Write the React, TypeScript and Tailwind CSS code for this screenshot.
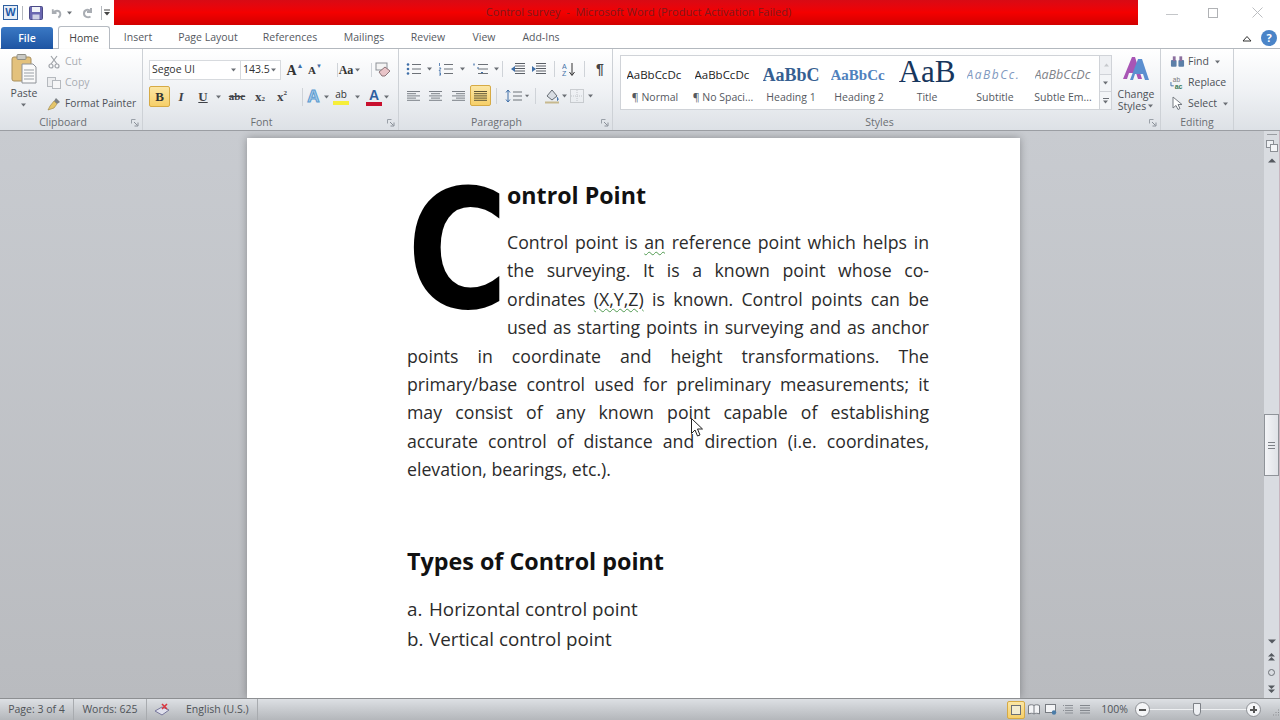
import type { ReactNode } from "react"

const ui = "font-['Open_Sans',sans-serif]"

function Caret({ className = "" }: { className?: string }) {
  return (
    <svg viewBox="0 0 6 4" className={`w-[6px] h-[4px] ${className}`}>
      <path d="M0 0.5h5L2.5 3.5z" fill="#6b6f75" />
    </svg>
  )
}

function Launcher() {
  return (
    <svg viewBox="0 0 8 8" className="w-[8px] h-[8px]">
      <path d="M0.5 0.5h4M0.5 0.5v4" stroke="#9aa0a8" fill="none" />
      <path d="M3 3l3.500 3.500M7 3.500V7H3.500" stroke="#8a9099" fill="none" />
    </svg>
  )
}

function Sep({ h = 18 }: { h?: number }) {
  return <div className="w-px bg-[#cfd3d8]" style={{ height: h }} />
}

function Cell({ w, children, className = "" }: { w: number; children?: ReactNode; className?: string }) {
  return (
    <div className={`flex items-center justify-center shrink-0 ${className}`} style={{ width: w }}>
      {children}
    </div>
  )
}

function Lines({ ys, x1 = 1, x2 = 13, color = "#6d7278" }: { ys: number[]; x1?: number; x2?: number; color?: string }) {
  return (
    <>
      {ys.map((y) => (
        <path key={y} d={`M${x1} ${y}H${x2}`} stroke={color} strokeWidth="1" />
      ))}
    </>
  )
}

function Align({ kind }: { kind: "left" | "center" | "right" | "justify" }) {
  const rows = [
    [1, 14],
    [1, 10],
    [1, 14],
    [1, 10],
    [1, 14],
  ]
  return (
    <svg viewBox="0 0 15 12" className="w-[15px] h-[12px]">
      {rows.map(([a, b], i) => {
        let x1 = a
        let x2 = b
        if (b === 10 && kind === "center") {
          x1 = 3
          x2 = 12
        }
        if (b === 10 && kind === "right") {
          x1 = 5
          x2 = 14
        }
        if (kind === "justify") x2 = 14
        return <path key={i} d={`M${x1} ${1.5 + i * 2.2}H${x2}`} stroke={kind === "justify" ? "#5d5436" : "#7b8087"} />
      })}
    </svg>
  )
}

function ListIcon({ kind }: { kind: "bullet" | "number" | "multi" }) {
  return (
    <svg viewBox="0 0 16 14" className="w-[16px] h-[14px]">
      {kind === "bullet" && (
        <>
          <circle cx="2" cy="2.5" r="1.3" fill="#3f6fa8" />
          <circle cx="2" cy="7" r="1.3" fill="#3f6fa8" />
          <circle cx="2" cy="11.5" r="1.3" fill="#3f6fa8" />
        </>
      )}
      {kind === "number" && (
        <path d="M1.500 1v3M1 6h2l-2 3h2M1 11h2l-1 1 1 1H1" stroke="#3f6fa8" fill="none" strokeWidth="0.8" />
      )}
      {kind === "multi" && <path d="M1 1.500v2M4 6h2M8 10.500h2" stroke="#3f6fa8" strokeWidth="1.2" />}
      <Lines ys={[2.5, 7, 11.5]} x1={kind === "multi" ? 5 : 6} x2={15} />
    </svg>
  )
}

function Indent({ dir }: { dir: "dec" | "inc" }) {
  return (
    <svg viewBox="0 0 16 14" className="w-[16px] h-[14px]">
      <Lines ys={[1.5, 4, 6.5, 9, 11.5]} x1={5} x2={15} color="#5a5f66" />
      <path d={dir === "dec" ? "M5 4L1 7l4 3z" : "M1 4l4 3-4 3z"} fill="#3f6fa8" />
    </svg>
  )
}

function WordIcon() {
  return (
    <div className="w-[15px] h-[15px] bg-[#e6edf6] border border-[#2f5f9f] flex items-center justify-center">
      <span className="font-['Liberation_Sans',sans-serif] font-bold text-[11px] leading-none text-[#1f5aa8]">W</span>
    </div>
  )
}

function TitleBar() {
  return (
    <div className="h-[25px] flex bg-white">
      <div className="w-[114px] flex items-center shrink-0">
        <Cell w={3} />
        <WordIcon />
        <Cell w={4} />
        <div className="w-px h-[14px] bg-[#b5b9bf]" />
        <Cell w={6} />
        <svg viewBox="0 0 14 14" className="w-[14px] h-[14px]">
          <rect x="0.5" y="0.5" width="13" height="13" rx="1" fill="#6a67b0" stroke="#4b4a86" />
          <rect x="3" y="1" width="8" height="5" fill="#f1f3f8" />
          <rect x="3.5" y="8.5" width="7" height="5" fill="#cfd1e6" />
        </svg>
        <Cell w={7} />
        <svg viewBox="0 0 14 12" className="w-[13px] h-[12px]">
          <path d="M3 2v4h4M3.500 6C5 3 10 2.500 11 6c.5 2-.5 4-2 5" stroke="#a9adb3" strokeWidth="2" fill="none" />
        </svg>
        <Cell w={4} />
        <Caret />
        <Cell w={9} />
        <svg viewBox="0 0 12 12" className="w-[12px] h-[12px]">
          <path d="M9 1v4H5M8.500 4.500C6 1.500 2 3 2 6.500S6 11 8.500 9.500" stroke="#a9adb3" strokeWidth="2" fill="none" />
        </svg>
        <Cell w={7} />
        <div className="w-px h-[14px] bg-[#b5b9bf]" />
        <Cell w={2} />
        <svg viewBox="0 0 7 7" className="w-[7px] h-[7px]">
          <path d="M0 1h6" stroke="#444" />
          <path d="M0 3h6L3 6.500z" fill="#444" />
        </svg>
      </div>
      <div className="w-[1024px] h-[25px] pl-[25px] flex items-center justify-center bg-gradient-to-b from-[#d80a14] via-[#f40000] to-[#d20000] shrink-0">
        <span className={`${ui} text-[11px] whitespace-pre text-[#7d1a1e]`}>Control survey  -  Microsoft Word (Product Activation Failed)</span>
      </div>
      <div className="flex-1 flex items-center">
        <Cell w={28} />
        <div className="w-[12px] h-px bg-[#c4c6c9] mt-1" />
        <Cell w={30} />
        <div className="w-[10px] h-[10px] border border-[#b0b2b5]" />
        <Cell w={34} />
        <svg viewBox="0 0 11 11" className="w-[11px] h-[11px]">
          <path d="M0.5 0.5l10 10M10.5 0.5l-10 10" stroke="#bcbec1" />
        </svg>
      </div>
    </div>
  )
}

function Tabs() {
  const tabs = [
    ["Insert", 56],
    ["Page Layout", 84],
    ["References", 80],
    ["Mailings", 68],
    ["Review", 60],
    ["View", 52],
    ["Add-Ins", 62],
  ] as const
  return (
    <div className={`${ui} h-[24px] flex items-end bg-white border-b border-[#b6bbc2] text-[10.5px] text-[#55595f] relative`}>
      <div className="ml-px w-[52px] h-[22px] pt-px rounded-t-[3px] bg-gradient-to-b from-[#3a78c4] to-[#1e55a3] text-white font-semibold flex items-center justify-center -mb-px">
        File
      </div>
      <div className="ml-[5px] w-[52px] h-[23px] pt-[2px] rounded-t-[3px] border border-b-0 border-[#b6bbc2] bg-white flex items-center justify-center -mb-px text-[#444]">
        Home
      </div>
      {tabs.map(([t, w]) => (
        <div key={t} className="h-[23px] pt-[3px] flex items-center justify-center" style={{ width: w }}>
          {t}
        </div>
      ))}
      <div className="flex-1" />
      <div className="h-[23px] pt-[3px] flex items-center gap-[9px] pr-[3px]">
        <svg viewBox="0 0 10 7" className="w-[10px] h-[7px]">
          <path d="M1 6l4-4.500L9 6z" fill="none" stroke="#333" />
        </svg>
        <div className="w-[16px] h-[16px] rounded-full bg-[#4a84c8] text-white font-bold text-[11px] flex items-center justify-center">?</div>
      </div>
    </div>
  )
}

function Group({ label, width, pr = 0, launcher = true, children }: { label: string; width: number; pr?: number; launcher?: boolean; children: ReactNode }) {
  return (
    <div className="h-full flex flex-col border-r border-[#cdd1d6] shrink-0 relative" style={{ width }}>
      <div className="flex-1 min-h-0">{children}</div>
      <div className="h-[16px] pt-[2px] flex items-center justify-center text-[10.5px] text-[#6a6e73]" style={{ paddingRight: pr }}>
        {label}
      </div>
      {launcher && (
        <div className="absolute right-[3px] bottom-[3px]">
          <Launcher />
        </div>
      )}
    </div>
  )
}

function Clipboard() {
  return (
    <div className="flex pt-[5px] pl-[5px]">
      <div className="w-[38px] flex flex-col items-center">
        <svg viewBox="0 0 26 30" className="w-[26px] h-[30px]">
          <rect x="1" y="3" width="19" height="24" rx="2" fill="#e3c17c" stroke="#a88f5e" />
          <rect x="6" y="0.5" width="9" height="5" rx="1" fill="#c9c9c4" stroke="#8e8e86" />
          <path d="M11 10h11l3 3v16H11z" fill="#fafafa" stroke="#8e9298" />
          <path d="M13 16h10M13 19h10M13 22h10M13 25h10" stroke="#9aa0a6" />
        </svg>
        <span className="mt-[3px] text-[10.5px] leading-[13px] text-[#4d5157]">Paste</span>
        <Caret className="mt-[3px]" />
      </div>
      <div className="pl-[2px] -mt-[3px] text-[10.5px] leading-[21px]">
        <div className="flex items-center h-[21px] text-[#a9adb3]">
          <svg viewBox="0 0 12 14" className="w-[12px] h-[14px] mx-[3px]">
            <path d="M3 1l6 8M9 1L3 9" stroke="#9fa3a8" strokeWidth="1.2" />
            <circle cx="3" cy="11" r="2" fill="none" stroke="#a0a4aa" strokeWidth="1.2" />
            <circle cx="9" cy="11" r="2" fill="none" stroke="#a0a4aa" strokeWidth="1.2" />
          </svg>
          <span className="ml-[2px]">Cut</span>
        </div>
        <div className="flex items-center h-[21px] text-[#a9adb3]">
          <svg viewBox="0 0 14 12" className="w-[14px] h-[12px] mx-[2px]">
            <rect x="0.5" y="0.5" width="8" height="9" fill="#ecedef" stroke="#b5b9be" />
            <rect x="5.5" y="3.5" width="8" height="8" fill="#f6f6f7" stroke="#b5b9be" />
          </svg>
          <span className="ml-[2px]">Copy</span>
        </div>
        <div className="flex items-center h-[21px] text-[#4d5157]">
          <svg viewBox="0 0 14 14" className="w-[14px] h-[14px] mx-[2px]">
            <path d="M9 1l4 4-3 2-3-3z" fill="#7d8186" />
            <path d="M7 4l3 3-3 4-6 2 2-4z" fill="#e5c56a" stroke="#9a8343" strokeWidth="0.6" />
          </svg>
          <span className="ml-[2px] text-[10.2px] whitespace-nowrap">Format Painter</span>
        </div>
      </div>
    </div>
  )
}

function FontGroup() {
  return (
    <div className="pt-[11px] pl-[6px] text-[#3f4247]">
      <div className="h-[20px] flex items-center">
        <div className="w-[92px] h-[20px] bg-white border border-[#d7dade] flex items-center justify-between pl-[2px] pr-[3px] text-[10.5px] text-[#333]">
          Segoe UI
          <Caret />
        </div>
        <div className="w-[40px] h-[20px] bg-white border border-l-0 border-[#d7dade] flex items-center justify-between pl-[2px] pr-[3px] text-[10.5px] text-[#333] overflow-hidden">
          <span className="w-[27px] overflow-hidden">143.5</span>
          <Caret />
        </div>
        <Cell w={4} />
        <Cell w={20} className="font-['Liberation_Serif',serif] font-bold text-[14px] text-[#333]">
          A<span className="text-[7px] -mt-2 text-[#3f6fa8]">▲</span>
        </Cell>
        <Cell w={20} className="font-['Liberation_Serif',serif] font-bold text-[11px] text-[#333]">
          A<span className="text-[6px] -mt-2 text-[#3f6fa8]">▼</span>
        </Cell>
        <Cell w={12} />
        <Sep h={14} />
        <Cell w={24} className="font-['Liberation_Serif',serif] font-bold text-[12px] text-[#333]">
          Aa
          <Caret className="ml-[2px]" />
        </Cell>
        <Cell w={9} />
        <Sep h={14} />
        <Cell w={21}>
          <svg viewBox="0 0 16 16" className="w-[16px] h-[16px]">
            <rect x="1" y="1" width="11" height="7" fill="#f4f4f4" stroke="#8d9197" />
            <path d="M4 10l6-5 5 4-5 5H7z" fill="#e9c4c8" stroke="#8d7478" />
          </svg>
        </Cell>
      </div>
      <div className="h-[21px] mt-[6px] flex items-center">
        <div className="w-[21px] h-[21px] rounded-[2px] border border-[#d6aa45] bg-gradient-to-b from-[#fbe6a4] to-[#f6cf68] flex items-center justify-center font-['Liberation_Serif',serif] font-bold text-[13px] text-[#333]">
          B
        </div>
        <Cell w={22} className="font-['Liberation_Serif',serif] italic font-bold text-[13px]">
          I
        </Cell>
        <Cell w={22} className="font-['Liberation_Serif',serif] font-bold text-[13px] underline">
          U
        </Cell>
        <Cell w={10}>
          <Caret />
        </Cell>
        <Cell w={26} className="font-['Liberation_Serif',serif] font-bold text-[11px] line-through">
          abc
        </Cell>
        <Cell w={20} className="font-['Liberation_Serif',serif] font-bold text-[13px]">
          x<span className="text-[7px] mt-[6px]">2</span>
        </Cell>
        <Cell w={24} className="font-['Liberation_Serif',serif] font-bold text-[13px]">
          x<span className="text-[7px] -mt-[6px]">2</span>
        </Cell>
        <Cell w={8} />
        <Sep h={18} />
        <Cell w={21} className="font-['Liberation_Sans',sans-serif] font-bold text-[17px] text-[#a9cdea] [-webkit-text-stroke:1px_#5b9bd0]">
          A
        </Cell>
        <Cell w={6}>
          <Caret />
        </Cell>
        <Cell w={3} />
        <div className="w-[16px] h-[18px] flex flex-col items-center">
          <span className="text-[10px] leading-[13px] text-[#333]">ab</span>
          <div className="w-[16px] h-[4px] bg-[#f6ee3a]" />
        </div>
        <Cell w={17}>
          <Caret />
        </Cell>
        <div className="w-[16px] h-[18px] flex flex-col items-center">
          <span className="font-['Liberation_Sans',sans-serif] font-bold text-[14px] leading-[14px] text-[#2f5f9f]">A</span>
          <div className="w-[16px] h-[4px] bg-[#c8102e]" />
        </div>
        <Cell w={10}>
          <Caret />
        </Cell>
      </div>
    </div>
  )
}

function ParagraphGroup() {
  return (
    <div className="pt-[11px] pl-[7px]">
      <div className="h-[18px] flex items-center">
        <Cell w={16}>
          <ListIcon kind="bullet" />
        </Cell>
        <Cell w={15}>
          <Caret />
        </Cell>
        <Cell w={18}>
          <ListIcon kind="number" />
        </Cell>
        <Cell w={15}>
          <Caret />
        </Cell>
        <Cell w={22}>
          <ListIcon kind="multi" />
        </Cell>
        <Cell w={10}>
          <Caret />
        </Cell>
        <Sep h={16} />
        <Cell w={7} />
        <Indent dir="dec" />
        <Cell w={5} />
        <Indent dir="inc" />
        <Cell w={7} />
        <Sep h={16} />
        <Cell w={7} />
        <svg viewBox="0 0 14 15" className="w-[14px] h-[15px]">
          <text x="0" y="7" fontSize="7" fontFamily="Liberation Sans" fill="#4472a8">A</text>
          <text x="0" y="14" fontSize="7" fontFamily="Liberation Sans" fill="#4472a8">Z</text>
          <path d="M10 1v12M7.500 10l2.500 3.500 2.500-3.500" stroke="#333" fill="none" />
        </svg>
        <Cell w={8} />
        <Sep h={16} />
        <Cell w={8} />
        <Cell w={14} className="font-['Liberation_Sans',sans-serif] font-bold text-[14px] text-[#444]">
          ¶
        </Cell>
      </div>
      <div className="h-[21px] mt-[7px] flex items-center">
        <Align kind="left" />
        <Cell w={7} />
        <Align kind="center" />
        <Cell w={8} />
        <Align kind="right" />
        <Cell w={4} />
        <div className="w-[21px] h-[21px] rounded-[2px] border border-[#d6aa45] bg-gradient-to-b from-[#fbe6a4] to-[#f6cf68] flex items-center justify-center">
          <Align kind="justify" />
        </div>
        <Cell w={5} />
        <Sep h={16} />
        <Cell w={8} />
        <svg viewBox="0 0 20 14" className="w-[20px] h-[14px]">
          <path d="M3 1v12M1 3.500L3 1l2 2.500M1 10.500L3 13l2-2.500" stroke="#3f6fa8" fill="none" />
          <Lines ys={[3, 7, 11]} x1={8} x2={17} />
        </svg>
        <Cell w={5}>
          <Caret />
        </Cell>
        <Cell w={5} />
        <Sep h={16} />
        <Cell w={8} />
        <svg viewBox="0 0 16 16" className="w-[16px] h-[16px]">
          <path d="M3 8l5-6 5 6-5 4z" fill="#d8dde3" stroke="#666c73" />
          <path d="M13 9c1 1.500 2 3 0 3.500" stroke="#4472a8" fill="#4472a8" />
          <path d="M1 14.500h14" stroke="#c7b98f" strokeWidth="2" />
        </svg>
        <Cell w={10}>
          <Caret />
        </Cell>
        <svg viewBox="0 0 14 14" className="w-[14px] h-[14px]">
          <rect x="0.5" y="0.5" width="13" height="13" fill="none" stroke="#a4a8ad" strokeDasharray="1 1" />
          <path d="M7 1v12M1 7h12" stroke="#c3c6ca" strokeDasharray="1 1" />
        </svg>
        <Cell w={14}>
          <Caret />
        </Cell>
      </div>
    </div>
  )
}

function StyleItem({ sample, label, className }: { sample: string; label: string; className: string }) {
  return (
    <div className="w-[68px] shrink-0 flex flex-col items-center">
      <div className="h-[32px] w-[57px] overflow-hidden flex items-center whitespace-nowrap">
        <span className={className}>{sample}</span>
      </div>
      <div className="text-[10.5px] leading-[13px] text-[#55595f] whitespace-nowrap">{label}</div>
    </div>
  )
}

function StylesGroup() {
  return (
    <div className="flex pt-[6px] pl-[7px]">
      <div className="w-[492px] h-[55px] bg-white border border-[#d0d3d8] flex">
        <div className="w-[479px] flex items-start pt-[3px]">
          <StyleItem sample="AaBbCcDc" label="¶ Normal" className="text-[11.5px] text-[#222]" />
          <StyleItem sample="AaBbCcDc" label="¶ No Spaci..." className="text-[11.5px] text-[#222]" />
          <StyleItem sample="AaBbCc" label="Heading 1" className="font-['Liberation_Serif',serif] font-bold text-[18px] text-[#365f91]" />
          <StyleItem sample="AaBbCc" label="Heading 2" className="font-['Liberation_Serif',serif] font-bold text-[15px] text-[#4f81bd]" />
          <StyleItem sample="AaB" label="Title" className="font-['Liberation_Serif',serif] text-[31px] -mt-[6px] text-[#17365d]" />
          <StyleItem sample="AaBbCc." label="Subtitle" className="italic text-[12px] tracking-[1.5px] text-[#7f99c0]" />
          <StyleItem sample="AaBbCcDc" label="Subtle Em..." className="italic text-[12.5px] text-[#7f8389]" />
        </div>
        <div className="w-[12px] flex flex-col border-l border-[#d0d3d8]">
          <div className="h-[18px] bg-[#eef0f3] flex items-center justify-center">
            <Caret className="rotate-180 opacity-30" />
          </div>
          <div className="h-[18px] bg-[#f3f5f7] border-y border-[#d0d3d8] flex items-center justify-center">
            <Caret />
          </div>
          <div className="flex-1 bg-[#f3f5f7] flex flex-col items-center justify-center gap-px">
            <div className="w-[6px] h-px bg-[#6b6f75]" />
            <Caret />
          </div>
        </div>
      </div>
      <div className="w-[50px] flex flex-col items-center">
        <svg viewBox="0 0 30 30" className="w-[30px] h-[30px] -mt-[1px]">
          <path d="M2 25L11 3h3l7 22h-4l-2-6H8l-2 6z" fill="#a855b5" />
          <path d="M9 26L17 5h4l7 21h-4l-2-6h-8l-2 6z" fill="#5b8fd0" />
        </svg>
        <div className="text-[10.5px] leading-[12px] text-center mt-[4px] text-[#4d5157]">
          Change
          <div className="flex items-center justify-center gap-[2px]">
            Styles
            <Caret />
          </div>
        </div>
      </div>
    </div>
  )
}

function EditingGroup() {
  return (
    <div className="pt-[2px] pl-[9px] text-[10.5px] text-[#4d5157]">
      <div className="h-[21px] flex items-center gap-[3px]">
        <svg viewBox="0 0 16 13" className="w-[15px] h-[13px]">
          <rect x="1" y="5" width="6" height="7" rx="1" fill="#5c7fa8" />
          <rect x="9" y="5" width="6" height="7" rx="1" fill="#5c7fa8" />
          <rect x="3" y="1" width="3" height="5" fill="#8b6f9e" />
          <rect x="10" y="1" width="3" height="5" fill="#8b6f9e" />
        </svg>
        Find
        <Caret className="ml-[3px]" />
      </div>
      <div className="h-[21px] flex items-center gap-[3px]">
        <svg viewBox="0 0 16 14" className="w-[15px] h-[14px]">
          <text x="3" y="6" fontSize="7" fontFamily="Liberation Sans" fill="#777">ab</text>
          <text x="5" y="13" fontSize="7.5" fontWeight="bold" fontFamily="Liberation Sans" fill="#3b7a57">ac</text>
          <path d="M1 6v4h3" stroke="#3f6fa8" fill="none" />
        </svg>
        Replace
      </div>
      <div className="h-[21px] flex items-center gap-[3px]">
        <svg viewBox="0 0 15 16" className="w-[15px] h-[16px]">
          <path d="M3 1v11l3-2.500 2 4 2-1-2-4h4z" fill="#fff" stroke="#777c83" />
        </svg>
        Select
        <Caret className="ml-[3px]" />
      </div>
    </div>
  )
}

function Ribbon() {
  return (
    <div className={`${ui} h-[82px] flex bg-gradient-to-b from-[#ffffff] via-[#f0f2f5] to-[#dde1e6] border-b border-[#9b9ea3] shadow-[0_1px_2px_rgba(0,0,0,0.25)] relative`}>
      <Group label="Clipboard" width={143} pr={16}>
        <Clipboard />
      </Group>
      <Group label="Font" width={256} pr={18}>
        <FontGroup />
      </Group>
      <Group label="Paragraph" width={214} pr={18}>
        <ParagraphGroup />
      </Group>
      <Group label="Styles" width={548} pr={14}>
        <StylesGroup />
      </Group>
      <Group label="Editing" width={73} launcher={false}>
        <EditingGroup />
      </Group>
    </div>
  )
}

function Line({ children }: { children: ReactNode }) {
  return <div className="[text-align-last:justify] whitespace-nowrap">{children}</div>
}

function Wavy({ children }: { children: ReactNode }) {
  return <span className="underline decoration-wavy decoration-[#4f9a4f] decoration-1 underline-offset-2">{children}</span>
}

function Page() {
  return (
    <div className="w-[773px] h-[560px] mt-[7px] ml-[247px] bg-white shadow-[0_0_8px_rgba(0,0,0,0.3)] pl-[160px] pr-[91px] pt-[42px] font-['Open_Sans',sans-serif] text-[#2b2b2b] overflow-hidden shrink-0">
      <div className="float-left w-[100px] h-[155px] font-['DejaVu_Sans',sans-serif] text-[166px] leading-[142px] font-bold text-black">
        <span className="inline-block origin-left scale-x-[0.83]">C</span>
      </div>
      <div className="text-[23.2px] leading-[30px] font-bold text-[#111]">ontrol Point</div>
      <div className="text-[17.7px] leading-[28.4px] mt-[18px]">
        <Line>
          Control point is <Wavy>an</Wavy> reference point which helps in
        </Line>
        <Line>the surveying. It is a known point whose co-</Line>
        <Line>
          ordinates <Wavy>(X,Y,Z)</Wavy> is known. Control points can be
        </Line>
        <Line>used as starting points in surveying and as anchor</Line>
        <Line>points in coordinate and height transformations. The</Line>
        <Line>primary/base control used for preliminary measurements; it</Line>
        <Line>may consist of any known point capable of establishing</Line>
        <Line>accurate control of distance and direction (i.e. coordinates,</Line>
        <div>elevation, bearings, etc.).</div>
      </div>
      <div className="text-[23.3px] leading-[32px] font-bold text-[#111] mt-[61px]">Types of Control point</div>
      <div className="text-[18.800px] leading-[30px] mt-[17px]">
        <div className="flex">
          <span className="w-[22px]">a.</span>Horizontal control point
        </div>
        <div className="flex">
          <span className="w-[22px]">b.</span>Vertical control point
        </div>
      </div>
    </div>
  )
}

function Scrollbar() {
  return (
    <div className="w-[16px] h-full bg-[#d9dce1] flex flex-col items-center shrink-0 border-r border-[#c9b3bd]">
      <div className="w-[10px] h-px bg-[#9a9da2] mt-[3px]" />
      <svg viewBox="0 0 12 12" className="w-[12px] h-[12px] mt-[5px]">
        <rect x="0.5" y="0.5" width="7" height="7" fill="#eef0f3" stroke="#8b8f95" />
        <rect x="4.5" y="4.5" width="7" height="7" fill="#f5f6f8" stroke="#8b8f95" />
      </svg>
      <svg viewBox="0 0 8 5" className="w-[8px] h-[5px] mt-[6px]">
        <path d="M0 4.500L4 0.500l4 4z" fill="#55595f" />
      </svg>
      <div className="h-[251px] shrink-0" />
      <div className="w-[15px] h-[62px] shrink-0 border border-[#8f9399] bg-gradient-to-r from-[#f3f4f7] to-[#dfe2e7] flex flex-col items-center justify-center gap-[2px]">
        <div className="w-[7px] h-px bg-[#7d8187]" />
        <div className="w-[7px] h-px bg-[#7d8187]" />
        <div className="w-[7px] h-px bg-[#7d8187]" />
      </div>
      <div className="flex-1" />
      <svg viewBox="0 0 8 5" className="w-[8px] h-[5px] mb-[9px]">
        <path d="M0 0.500L4 4.500l4-4z" fill="#55595f" />
      </svg>
      <svg viewBox="0 0 7 8" className="w-[7px] h-[8px] mb-[8px]">
        <path d="M0 3.500L3.500 0 7 3.500zM0 7.500L3.500 4 7 7.500z" fill="#55595f" />
      </svg>
      <div className="w-[7px] h-[7px] rounded-full border border-[#6c7076] mb-[9px]" />
      <svg viewBox="0 0 7 8" className="w-[7px] h-[8px] mb-[5px]">
        <path d="M0 0.500L3.500 4 7 0.500zM0 4.500L3.500 8 7 4.500z" fill="#55595f" />
      </svg>
    </div>
  )
}

function DocArea() {
  return (
    <div className="h-[567px] flex bg-gradient-to-b from-[#c8cbd0] to-[#b9bbbf] overflow-hidden relative">
      <div className="flex-1 min-w-0 overflow-hidden flex">
        <Page />
      </div>
      <Scrollbar />
      <svg viewBox="0 0 12 20" className="absolute left-[691px] top-[287px] w-[12px] h-[20px]">
        <path d="M0.500 0.500v15l3.500-3.500 2.500 6 2.500-1-2.500-6h5z" fill="#fff" stroke="#222" />
      </svg>
    </div>
  )
}

function ViewIcon({ children }: { children: ReactNode }) {
  return <Cell w={17}>{children}</Cell>
}

function StatusBar() {
  return (
    <div className={`${ui} h-[23px] pb-px flex items-center border-t border-[#8d8f92] bg-gradient-to-b from-[#dde0e4] to-[#b2b5b9] text-[10.5px] text-[#4f5358]`}>
      <Cell w={74} className="border-r border-[#a8abaf] h-full">Page: 3 of 4</Cell>
      <Cell w={73} className="border-r border-[#a8abaf] h-full">Words: 625</Cell>
      <Cell w={30}>
        <svg viewBox="0 0 16 14" className="w-[16px] h-[14px]">
          <path d="M1 8l7-4 7 3-7 5z" fill="#dfe0ec" stroke="#77779c" />
          <path d="M8 1l5 5M13 1L8 6" stroke="#d9363e" strokeWidth="1.6" />
        </svg>
      </Cell>
      <div className="w-[81px] h-full flex items-center pl-[9px] border-r border-[#a8abaf]">English (U.S.)</div>
      <div className="flex-1" />
      <div className="w-[18px] h-[18px] rounded-[2px] border border-[#d6aa45] bg-gradient-to-b from-[#fbe6a4] to-[#f6cf68] flex items-center justify-center">
        <div className="w-[10px] h-[10px] border border-[#6b6f75] bg-[#f3ecd0]" />
      </div>
      <ViewIcon>
        <svg viewBox="0 0 12 11" className="w-[12px] h-[11px]">
          <path d="M0.500 1.500c2-1 4-1 5.500 0 1.500-1 3.500-1 5.500 0v8.500c-2-1-4-1-5.500 0-1.500-1-3.500-1-5.500 0zM6 1.500v8.500" fill="#f3f4f6" stroke="#777b81" />
        </svg>
      </ViewIcon>
      <ViewIcon>
        <svg viewBox="0 0 12 11" className="w-[12px] h-[11px]">
          <rect x="0.5" y="0.5" width="10" height="8" fill="#f3f4f6" stroke="#777b81" />
          <circle cx="9" cy="8.500" r="2.200" fill="#4a7ca8" />
        </svg>
      </ViewIcon>
      <ViewIcon>
        <svg viewBox="0 0 12 11" className="w-[12px] h-[11px]">
          <path d="M3 1.500h8M3 4h8M3 6.500h8M3 9h8M1 1.500h1M1 6.500h1" stroke="#8c9096" />
        </svg>
      </ViewIcon>
      <ViewIcon>
        <svg viewBox="0 0 12 11" className="w-[12px] h-[11px]">
          <path d="M1 1.500h10M1 4h10M1 6.500h10M1 9h10" stroke="#83878d" />
        </svg>
      </ViewIcon>
      <Cell w={8} />
      <span>100%</span>
      <Cell w={7} />
      <div className="w-[15px] h-[15px] rounded-full border border-[#8d9095] bg-[#f4f5f7] flex items-center justify-center">
        <div className="w-[7px] h-[2px] bg-[#555]" />
      </div>
      <div className="w-[96px] h-px bg-[#eef0f2] relative">
        <div className="absolute left-[43px] -top-[6px] w-[8px] h-[13px] bg-[#eef0f3] border border-[#7d8187] rounded-b-[4px]" />
      </div>
      <div className="w-[15px] h-[15px] rounded-full border border-[#8d9095] bg-[#f4f5f7] flex items-center justify-center relative">
        <div className="w-[7px] h-[2px] bg-[#555]" />
        <div className="absolute w-[2px] h-[7px] bg-[#555]" />
      </div>
      <Cell w={11} />
      <svg viewBox="0 0 8 8" className="w-[8px] h-[8px] mt-[6px]">
        <path d="M6 1h1M3.500 3.500h1M6 3.500h1M1 6h1M3.500 6h1M6 6h1" stroke="#8a8d91" />
      </svg>
    </div>
  )
}

export default function App() {
  return (
    <div className="w-[1280px] h-[720px] overflow-hidden bg-white">
      <TitleBar />
      <Tabs />
      <Ribbon />
      <DocArea />
      <StatusBar />
    </div>
  )
}
